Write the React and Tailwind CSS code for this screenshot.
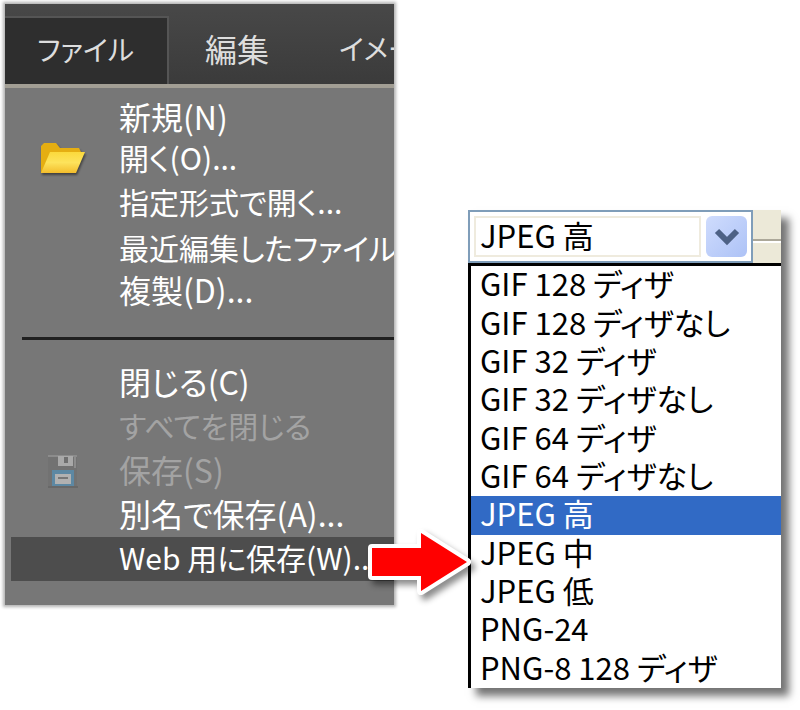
import { useState } from "react"
import clsx from "clsx"

const menuBar = [
  { label: "ファイル", className: "w-[164px] pl-8 pb-1 text-[28px] bg-[#2e2e2e] border-t-2 border-r-2 border-[#555555]" },
  { label: "編集", className: "w-[134px] pl-9 pb-1 text-[32px]" },
  { label: "イメージ", className: "pl-9 pb-1 text-[28px]" },
]

const openItems = [
  { label: "新規(N)", size: "h-[42px] text-[32px]" },
  { label: "開く(O)...", size: "h-10 text-[30px]", icon: "folder" },
  { label: "指定形式で開く...", size: "h-12 text-[30px]" },
  { label: "最近編集したファイル", size: "h-11 text-[30px]" },
  { label: "複製(D)...", size: "h-10 text-[32px]" },
]

const saveItems = [
  { label: "閉じる(C)", size: "h-11 text-[32px]" },
  { label: "すべてを閉じる", size: "h-11 text-[30px]", disabled: true },
  { label: "保存(S)", size: "h-11 text-[32px]", icon: "floppy", disabled: true },
  { label: "別名で保存(A)...", size: "h-11 text-[32px]" },
  { label: "Web 用に保存(W)...", size: "h-11 text-[30px]", active: true },
]

const presets = [
  "GIF 128 ディザ",
  "GIF 128 ディザなし",
  "GIF 32 ディザ",
  "GIF 32 ディザなし",
  "GIF 64 ディザ",
  "GIF 64 ディザなし",
  "JPEG 高",
  "JPEG 中",
  "JPEG 低",
  "PNG-24",
  "PNG-8 128 ディザ",
]

function FolderIcon() {
  return (
    <svg width="50" height="38" viewBox="0 0 50 38" className="drop-shadow-[1px_2px_1px_rgba(0,0,0,0.45)]" aria-hidden="true">
      <defs>
        <linearGradient id="folderFront" x1="0" y1="0" x2="0" y2="1">
          <stop offset="0" stopColor="#fbd93c" />
          <stop offset="0.5" stopColor="#fde35c" />
          <stop offset="1" stopColor="#f3bd2c" />
        </linearGradient>
      </defs>
      <path d="M3 33V6l3-3h12l4 5h19l2 4v8L33 33z" fill="#e5ae12" />
      <path d="M12 12h35L38 33H3z" fill="url(#folderFront)" />
    </svg>
  )
}

function FloppyIcon() {
  return (
    <svg width="36" height="38" viewBox="0 0 36 38" aria-hidden="true">
      <path d="M3 3h29v32H3z" fill="#727272" />
      <path d="M3 3h29v2H3zM31 4v12h-2V4z" fill="#8c8c8c" />
      <path d="M3 34h30v2H3z" fill="#686868" />
      <path d="M13 4h15v10H13z" fill="#a9a9a9" />
      <path d="M19 5h4v6h-4z" fill="#6f6f6f" />
      <path d="M7 18h22v16H7z" fill="#5d88a3" />
      <path d="M10 22h16v10H10z" fill="#b1b1b1" />
      <path d="M13 25h10v2H13z" fill="#777777" />
    </svg>
  )
}

function MenuItem({ item }) {
  return (
    <li>
      <button
        type="button"
        disabled={item.disabled}
        className={clsx(
          "flex w-full items-center whitespace-nowrap text-left",
          item.size,
          item.disabled ? "text-[#a3a3a3]" : "text-white",
          item.active && "bg-[#4d4d4d]"
        )}
      >
        <span className="flex w-[108px] shrink-0 justify-center pr-1">
          {item.icon === "folder" && <FolderIcon />}
          {item.icon === "floppy" && <FloppyIcon />}
        </span>
        <span className="pb-1">{item.label}</span>
      </button>
    </li>
  )
}

function FileMenu() {
  return (
    <section className="relative">
      <div className="overflow-hidden bg-[#777777] pb-6 shadow-[0_0_3px_2px_rgba(0,0,0,0.3)]">
        <nav className="flex h-[84px] border-b-4 border-[#a29e94] bg-linear-to-b from-[#484848] to-[#3b3b3b] pt-3">
          {menuBar.map((m) => (
            <button key={m.label} type="button" className={clsx("shrink-0 whitespace-nowrap text-left text-[#dddddd]", m.className)}>
              {m.label}
            </button>
          ))}
        </nav>

        <ul className="pt-[9px] pl-[6px]">
          {openItems.map((item) => <MenuItem key={item.label} item={item} />)}
        </ul>
        <hr className="mt-[26px] mb-[21px] ml-[17px] border-t-3 border-[#202020]" />
        <ul className="pl-[6px]">
          {saveItems.map((item) => <MenuItem key={item.label} item={item} />)}
        </ul>
      </div>

      {/* arrow pointing at the preset list */}
      <svg
        width="108"
        height="76"
        viewBox="0 0 108 76"
        className="absolute -right-20 bottom-[6px] z-10 drop-shadow-[4px_5px_3px_rgba(0,0,0,0.45)]"
        aria-hidden="true"
      >
        <path d="M6 25H55V10L101 39 55 68V53H6z" fill="#ff0000" stroke="#ffffff" strokeWidth="8" strokeLinejoin="round" />
        <path d="M6 25H55V10L101 39 55 68V53H6z" fill="#ff0000" />
      </svg>
    </section>
  )
}

function PresetList() {
  const [preset, setPreset] = useState("JPEG 高")

  return (
    <section className="mt-[206px] bg-white shadow-[8px_8px_8px_rgba(0,0,0,0.55)]">
      <div className="flex bg-[#ece9d8]">
        <div className="relative h-[53px] min-w-0 flex-1 border-2 border-[#7f9db9] bg-white p-1">
          <select
            aria-label="プリセット"
            value={preset}
            onChange={(e) => setPreset(e.target.value)}
            className="h-full w-[calc(100%-46px)] appearance-none border-2 border-[#efebde] bg-white pb-1 pl-1 leading-8 text-black outline-none"
          >
            {presets.map((p) => <option key={p}>{p}</option>)}
          </select>
          <span className="pointer-events-none absolute top-1 right-1 flex h-[41px] w-[41px] items-center justify-center rounded-md bg-linear-to-br from-[#cfdcfd] to-[#adc2f6]">
            <svg width="26" height="20" viewBox="0 0 26 20" aria-hidden="true">
              <path d="M3 4l10 10L23 4" fill="none" stroke="#4d6185" strokeWidth="6" />
            </svg>
          </span>
        </div>
        <div className="flex w-7 flex-col justify-center">
          <div className="mt-2 h-1 border-t-2 border-[#aca899] bg-white" />
        </div>
      </div>

      <ul role="listbox" aria-label="プリセット" className="grid min-h-[425px] auto-rows-fr border-t-3 border-l-3 border-black">
        {presets.map((p) => (
          <li
            key={p}
            role="option"
            aria-selected={p === preset}
            onClick={() => setPreset(p)}
            className={clsx(
              "flex items-center whitespace-nowrap pb-1 pl-[9px]",
              p === preset ? "bg-[#316ac5] text-white" : "text-black"
            )}
          >
            {p}
          </li>
        ))}
      </ul>
    </section>
  )
}

export default function App() {
  return (
    <main className="grid min-h-screen grid-cols-[minmax(0,389fr)_minmax(0,313fr)] items-start gap-[74px] bg-white pt-1 pr-[19px] pb-5 pl-[5px] font-['Noto_Sans_CJK_JP',sans-serif] text-[31px] leading-8 [font-feature-settings:'palt']">
      <FileMenu />
      <PresetList />
    </main>
  )
}
